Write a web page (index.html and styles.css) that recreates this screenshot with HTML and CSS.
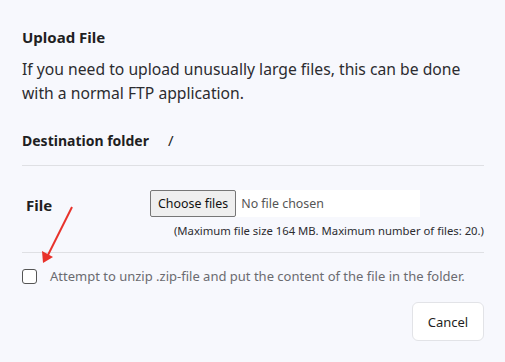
FILE: index.html
```html
<!DOCTYPE html>
<html lang="en">
<head>
    <meta charset="UTF-8">
    <title>Upload File</title>
    <link rel="stylesheet" href="styles.css">
</head>
<body>
    <div class="dialog">
        <h2 class="title">Upload File</h2>
        <p class="intro">If you need to upload unusually large files, this can be done with a normal FTP application.</p>

        <div class="row dest">
            <div class="label">Destination folder</div>
            <div class="value">/</div>
        </div>

        <div class="row file-row">
            <div class="label file-label">File</div>
            <div class="file-field">
                <div class="file-input">
                    <span class="file-btn">Choose files</span>
                    <span class="file-name">No file chosen</span>
                </div>
                <div class="hint">(Maximum file size 164 MB. Maximum number of files: 20.)</div>
            </div>
        </div>

        <label class="unzip">
            <span class="box"></span>
            <span>Attempt to unzip .zip-file and put the content of the file in the folder.</span>
        </label>

        <div class="actions">
            <button class="cancel">Cancel</button>
        </div>

        <!-- annotation arrow pointing at the checkbox -->
        <svg class="arrow" width="36" height="62" viewBox="0 0 36 62">
            <line x1="32" y1="2" x2="8" y2="50" stroke="#e8322b" stroke-width="2"/>
            <polygon points="3,58 2,46 13,52" fill="#e8322b"/>
        </svg>
    </div>
</body>
</html>
```

FILE: styles.css
```css
body {
    margin: 0;
    background-color: #f7f8fd;
    font-family: "Noto Sans", sans-serif;
    color: #1f1f23;
}
.dialog {
    position: relative;
    padding: 26px 21px 20px 22px;
}
.title {
    margin: 0;
    font-size: 15px;
    font-weight: bold;
    line-height: 22px;
}
.intro {
    margin: 9px 0 0;
    font-size: 15.7px;
    line-height: 24px;
    color: #2c2c30;
}
.row {
    display: flex;
    align-items: center;
    border-bottom: 1px solid #dfe0e4;
}
.dest {
    margin-top: 25px;
    padding-bottom: 15px;
}
.label {
    font-size: 14px;
    font-weight: bold;
    width: 146px;
}
.value {
    font-size: 15px;
}
.file-row {
    align-items: flex-start;
    padding: 24px 0 14px;
}
.file-label {
    font-size: 15px;
    width: 124px;
    padding: 5px 0 0 4px;
}
.file-field {
    flex: 1;
    display: flex;
    flex-direction: column;
    align-items: flex-end;
}
.file-input {
    display: flex;
    align-items: center;
    align-self: flex-start;
    width: 270px;
    background-color: white;
    font-size: 12.4px;
}
.file-btn {
    background-color: #efefef;
    border: 1px solid #767676;
    border-radius: 2px;
    padding: 4px 7px;
    color: #111;
}
.file-name {
    padding: 0 5px;
    color: #555;
}
.hint {
    margin-top: 6px;
    font-size: 11.3px;
    color: #2c2c30;
}
.arrow {
    position: absolute;
    left: 40px;
    top: 205px;
}
.unzip {
    display: flex;
    align-items: center;
    gap: 13px;
    padding-top: 14px;
    font-size: 13px;
    color: #6b6b70;
}
.box {
    width: 13px;
    height: 13px;
    border: 1px solid #555;
    border-radius: 3px;
    background: white;
}
.actions {
    display: flex;
    justify-content: flex-end;
    margin-top: 17px;
}
.cancel {
    font-family: inherit;
    font-size: 13px;
    color: #1f1f23;
    background: white;
    border: 1px solid #e2e3e7;
    border-radius: 6px;
    width: 72px;
    height: 39px;
}
```
